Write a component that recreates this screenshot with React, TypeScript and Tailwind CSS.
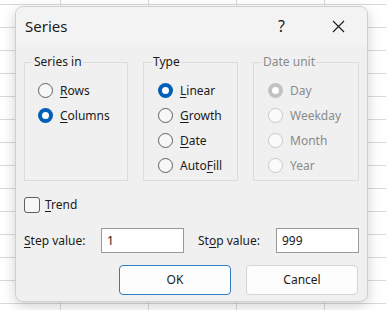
import { ReactNode } from "react";

type Opt = { label: ReactNode; checked?: boolean };

const font = "font-['Segoe_UI','Noto_Sans',sans-serif]";

const U = ({ children }: { children: ReactNode }) => (
  <span className="underline underline-offset-[2px] decoration-[1px]">{children}</span>
);

const Radio = ({ label, checked, disabled }: Opt & { disabled?: boolean }) => {
  let circle;
  if (checked && !disabled) {
    circle = (
      <span className="flex h-[15px] w-[15px] items-center justify-center rounded-full bg-[#005fb8]">
        <span className="h-[7px] w-[7px] rounded-full bg-white" />
      </span>
    );
  } else if (checked) {
    circle = (
      <span className="flex h-[15px] w-[15px] items-center justify-center rounded-full bg-[#c2c2c2]">
        <span className="h-[7px] w-[7px] rounded-full bg-white" />
      </span>
    );
  } else {
    circle = (
      <span
        className={
          disabled
            ? "h-[15px] w-[15px] rounded-full border border-[#c9c9c9] bg-[#fbfbfb]"
            : "h-[15px] w-[15px] rounded-full border border-[#5f5f5f] bg-[#f7f7f7]"
        }
      />
    );
  }
  return (
    <div className="flex h-[25px] items-center gap-[7px]">
      {circle}
      <span className={disabled ? "text-[#8a8a8a]" : "text-[#1b1b1b]"}>{label}</span>
    </div>
  );
};

const Group = ({
  title,
  width,
  items,
  indent,
  disabled,
}: {
  title: string;
  width: string;
  items: Opt[];
  indent: string;
  disabled?: boolean;
}) => (
  <fieldset className={`${width} h-[127px] border border-[#dcdcdc]`}>
    <legend className={`ml-[8px] px-[1px] leading-[16px] ${disabled ? "text-[#8a8a8a]" : "text-[#1b1b1b]"}`}>
      {title}
    </legend>
    <div className={`${indent} pt-[8px]`}>
      {items.map((it, i) => (
        <Radio key={i} {...it} disabled={disabled} />
      ))}
    </div>
  </fieldset>
);

export default function App() {
  return (
    <div
      className={`${font} relative h-[310px] w-[386px] overflow-hidden bg-white bg-[linear-gradient(to_right,#d9d9d9_1px,transparent_1px),linear-gradient(to_bottom,#d9d9d9_1px,transparent_1px)] bg-[size:88px_23px] bg-[position:60px_4px] text-[12px]`}
    >
      <div className="absolute left-[15px] top-[6px] flex h-[296px] w-[353px] flex-col overflow-hidden rounded-[8px] border border-[#cfcfcf] bg-[#f0f0f0] shadow-[0_4px_14px_rgba(0,0,0,0.18)]">
        <div className="flex h-[38px] items-center bg-[#f3f3f3] pl-[9px] pr-[22px]">
          <span className="flex-1 text-[15px] text-[#1b1b1b]">Series</span>
          <span className="mr-[47px] text-[16px] text-[#1b1b1b]">?</span>
          <svg width="13" height="13" viewBox="0 0 13 13" className="text-[#1b1b1b]">
            <path d="M1 1L12 12M12 1L1 12" stroke="currentColor" strokeWidth="1.1" />
          </svg>
        </div>

        <div className="flex flex-1 flex-col px-[8px] pt-[9px]">
          <div className="flex gap-[15px]">
            <Group
              title="Series in"
              width="w-[104px]"
              indent="pl-[13px]"
              items={[
                { label: <><U>R</U>ows</> },
                { label: <><U>C</U>olumns</>, checked: true },
              ]}
            />
            <Group
              title="Type"
              width="w-[95px]"
              indent="pl-[14px]"
              items={[
                { label: <><U>L</U>inear</>, checked: true },
                { label: <><U>G</U>rowth</> },
                { label: <><U>D</U>ate</> },
                { label: <>Auto<U>F</U>ill</> },
              ]}
            />
            <Group
              title="Date unit"
              width="w-[106px]"
              indent="pl-[14px]"
              disabled
              items={[
                { label: "Day", checked: true },
                { label: "Weekday" },
                { label: "Month" },
                { label: "Year" },
              ]}
            />
          </div>

          <div className="mt-[15px] flex items-center gap-[5px]">
            <span className="h-[16px] w-[16px] rounded-[3px] border border-[#5f5f5f] bg-[#f7f7f7]" />
            <span className="text-[#1b1b1b]">
              <U>T</U>rend
            </span>
          </div>

          <div className="mt-[14px] flex h-[25px] items-center text-[#1b1b1b]">
            <span className="w-[77px]">
              <U>S</U>tep value:
            </span>
            <div className="flex h-[25px] w-[83px] items-center border border-[#9a9a9a] bg-white pl-[5px]">1</div>
            <span className="ml-[14px] w-[78px]">
              St<U>o</U>p value:
            </span>
            <div className="flex h-[25px] w-[83px] items-center border border-[#9a9a9a] bg-white pl-[5px]">999</div>
          </div>

          <div className="mt-[12px] flex justify-end gap-[15px] pr-[1px]">
            <button className="h-[30px] w-[112px] rounded-[4px] border border-[#2f7cc4] bg-[#fdfdfd] text-[#1b1b1b]">
              OK
            </button>
            <button className="h-[30px] w-[112px] rounded-[4px] border border-[#d4d4d4] bg-[#fdfdfd] text-[#1b1b1b]">
              Cancel
            </button>
          </div>
        </div>
      </div>
    </div>
  );
}
